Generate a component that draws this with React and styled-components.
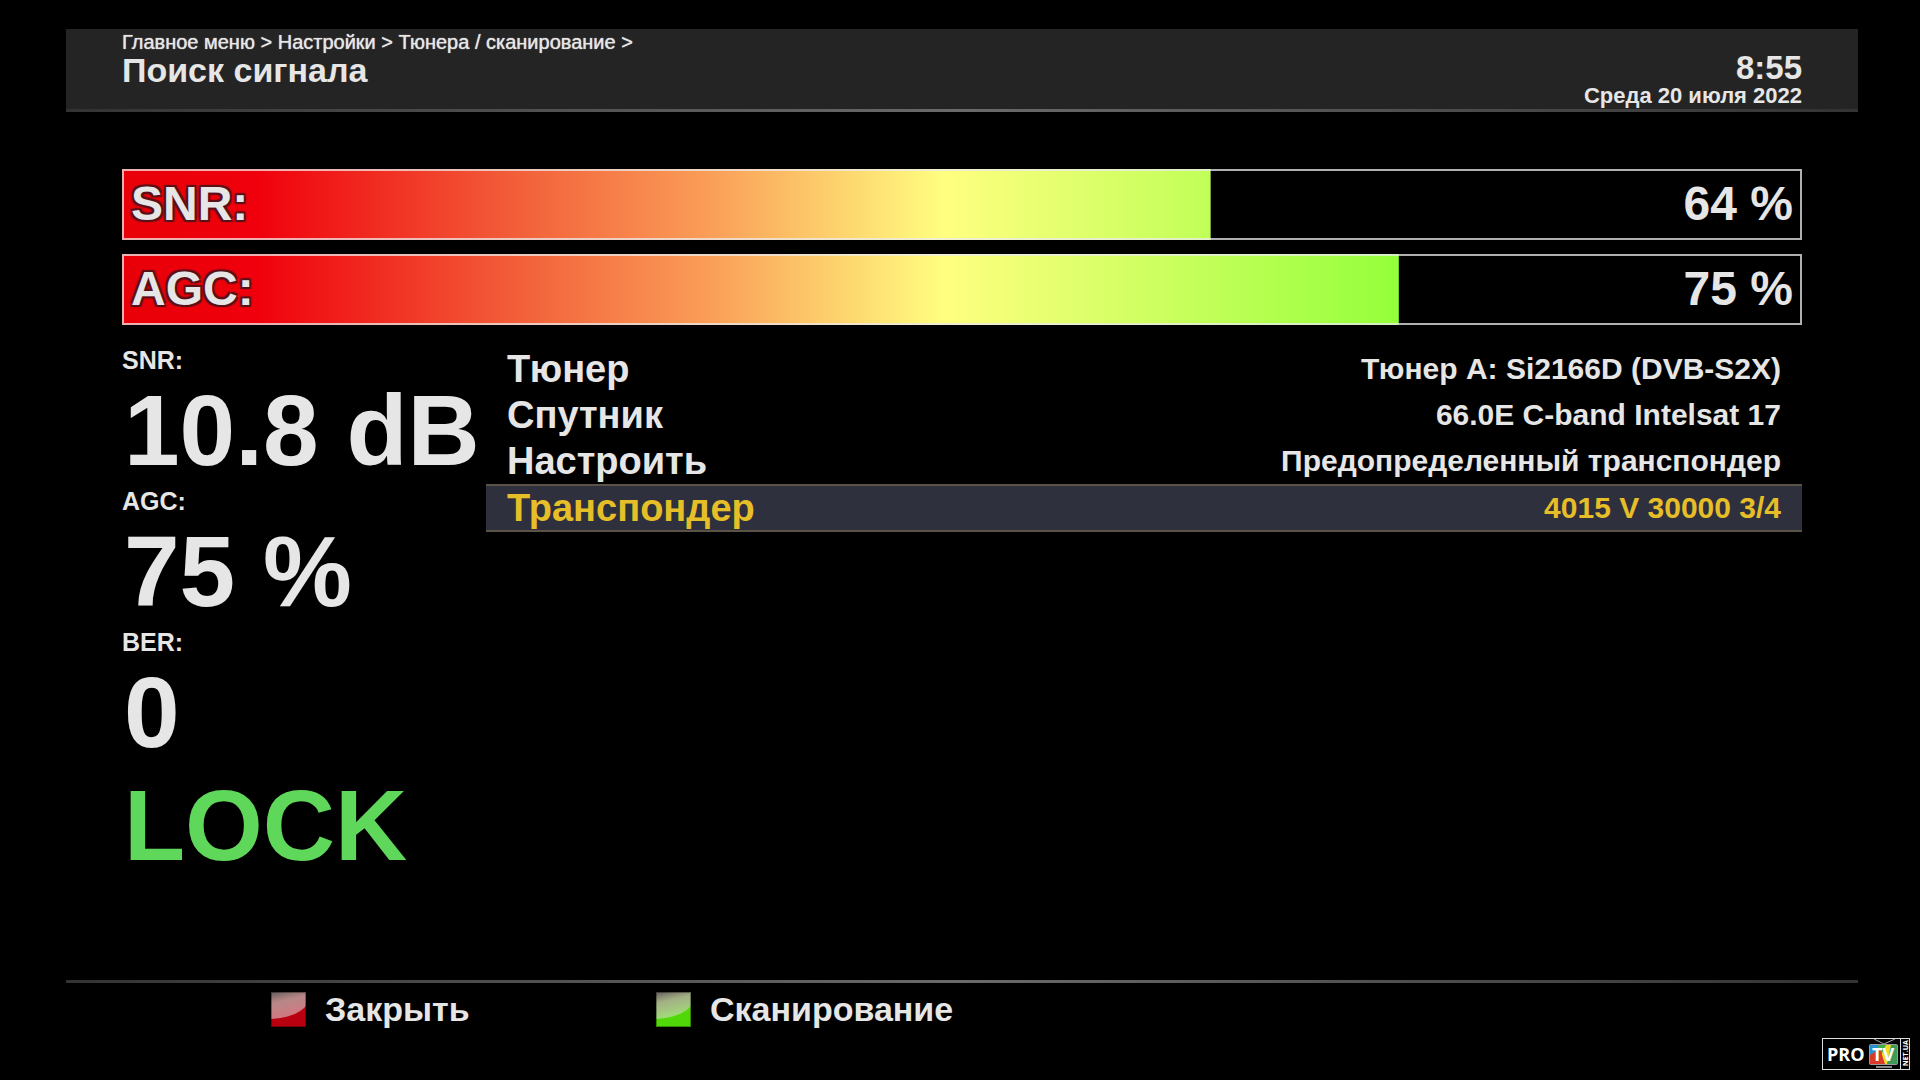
import React from 'react'
import styled, { createGlobalStyle, css } from 'styled-components'

const GlobalStyle = createGlobalStyle`
  * {
    box-sizing: border-box;
  }

  body {
    margin: 0;
    background: #000;
    color: #e6e6e6;
    font-family: 'Liberation Sans', Arial, sans-serif;
    font-weight: bold;
  }
`

const Screen = styled.div`
  position: relative;
  display: flex;
  flex-direction: column;
  min-height: 100vh;
  padding: 29px 62px 0 66px;
`

const Header = styled.header`
  display: flex;
  justify-content: space-between;
  padding: 2px 56px 0;
  height: 83px;
  background: #242424;
  border-bottom: 3px solid;
  border-image: linear-gradient(90deg, #333, #6a6a6a 50%, #333) 1;
`

const Breadcrumbs = styled.nav`
  font-size: 20px;
  font-weight: normal;
  line-height: 22px;
  text-shadow: 0 0 1px #e6e6e6;

  a {
    color: inherit;
    text-decoration: none;
  }
`

const Title = styled.h1`
  margin: 0;
  font-size: 34px;
  line-height: 34px;
`

const Clock = styled.div`
  display: flex;
  flex-direction: column;
  padding-top: 20px;
  text-align: right;
`

const Time = styled.time`
  font-size: 33px;
  line-height: 34px;
`

const Day = styled.time`
  font-size: 22px;
  line-height: 22px;
`

const Main = styled.main`
  flex: 1;
  padding: 57px 56px 0;
`

const Meters = styled.section`
  display: flex;
  flex-direction: column;
  gap: 14px;
`

const Meter = styled.div`
  position: relative;
  display: flex;
  align-items: center;
  justify-content: space-between;
  height: 71px;
  padding: 0 9px 2px;
  font-size: 48px;
`

const MeterFill = styled.div`
  position: absolute;
  inset: 0;
  background: linear-gradient(
    90deg,
    #e80008 0%,
    #f0000c 8%,
    #f25c38 23%,
    #fa9e58 35%,
    #ffff80 49%,
    #90ff38 77%
  );
`

const MeterFrame = styled.div`
  position: absolute;
  inset: 0;
  border: 2px solid rgba(235, 235, 235, 0.75);
`

const MeterText = styled.span`
  position: relative;
  text-shadow: ${props =>
    props.$outlined
      ? '-2px -2px 1px #5a1018, 2px -2px 1px #5a1018, -2px 2px 1px #5a1018, 2px 2px 1px #5a1018'
      : 'none'};
`

const Columns = styled.div`
  display: grid;
  grid-template-columns: 364px 1fr;
  margin-top: 19px;
`

const valueStyles = css`
  padding-left: 2px;
  font-size: 100px;
  line-height: 109px;
`

const Readings = styled.dl`
  margin: 0;
  white-space: nowrap;

  dt {
    font-size: 25px;
    line-height: 32px;
  }

  dd {
    margin: 0;
    ${valueStyles}
  }
`

const Lock = styled.div`
  margin-top: 4px;
  color: #5fd75a;
  ${valueStyles}
`

const Settings = styled.div`
  display: flex;
  flex-direction: column;
  padding-top: 2px;
`

const selectedStyles = css`
  height: 48px;
  background: #2e303e;
  border-color: #5c5348;
  color: #e6be28;
`

const SettingRow = styled.button`
  display: flex;
  align-items: center;
  justify-content: space-between;
  height: 46px;
  padding: 0 21px;
  background: none;
  border: solid transparent;
  border-width: 2px 0;
  color: inherit;
  font: inherit;
  font-size: 38px;
  line-height: 42px;
  text-align: left;

  ${props => props.$selected && selectedStyles}
`

const SettingValue = styled.span`
  font-size: 30px;
`

const Footer = styled.footer`
  display: flex;
  height: 100px;
  padding: 9px 0 0 205px;
  border-top: 3px solid;
  border-image: linear-gradient(90deg, #333, #6a6a6a 50%, #333) 1;
`

const ColorButton = styled.button`
  display: flex;
  align-items: center;
  gap: 19px;
  width: 385px;
  height: 35px;
  padding: 0;
  background: none;
  border: 0;
  color: inherit;
  font: inherit;
  font-size: 34px;
`

const Watermark = styled.svg`
  position: absolute;
  right: 10px;
  bottom: 10px;
`

const meters = [
  { name: 'SNR:', value: '64 %', level: 64.8 },
  { name: 'AGC:', value: '75 %', level: 76 },
]

const readings = [
  { name: 'SNR:', value: '10.8 dB' },
  { name: 'AGC:', value: '75 %' },
  { name: 'BER:', value: '0' },
]

const settings = [
  { name: 'Тюнер', value: 'Тюнер A: Si2166D (DVB-S2X)' },
  { name: 'Спутник', value: '66.0E C-band Intelsat 17' },
  { name: 'Настроить', value: 'Предопределенный транспондер' },
  { name: 'Транспондер', value: '4015 V 30000 3/4', selected: true },
]

const actions = [
  { id: 'red', name: 'Закрыть', color: '#b80010', shine: '#d07880' },
  { id: 'green', name: 'Сканирование', color: '#50d808', shine: '#a0d878' },
]

const Swatch = ({ id, color, shine }) => (
  <svg width="35" height="35" viewBox="0 0 35 35" aria-hidden="true">
    <defs>
      <linearGradient id={`shine-${id}`} x1="0" y1="0" x2="0.3" y2="1">
        <stop offset="0" stopColor="#605858" />
        <stop offset="0.4" stopColor="#b8a8a4" stopOpacity="0.8" />
        <stop offset="0.9" stopColor={shine} />
      </linearGradient>
    </defs>
    <rect width="35" height="35" fill={color} />
    <path d="M0 0H35V14C28 22 16 26 0 27Z" fill={`url(#shine-${id})`} />
    <rect
      x="0.5"
      y="0.5"
      width="34"
      height="34"
      fill="none"
      stroke="#000"
      strokeOpacity="0.35"
    />
  </svg>
)

const ProTv = () => (
  <Watermark width="88" height="32" viewBox="0 0 88 32" role="img" aria-label="PRO TV NET.UA">
    <rect x="0.5" y="0.5" width="87" height="31" fill="#000" stroke="#ddd" />
    <path d="M78.5 0V31" stroke="#ddd" />
    <text x="5" y="23" fontSize="18" fill="#fff" fontFamily="Open Sans, sans-serif">
      PRO
    </text>
    <path d="M62 6L52 1M62 6L73 1" stroke="#aaa" />
    <rect x="47" y="6" width="29" height="21" rx="2" fill="#9a9a9a" />
    <path d="M48 7H61L57 18L48 24Z" fill="#2a8fd0" />
    <path d="M57 7H66L60 25H48V21Z" fill="#3fae49" />
    <path d="M64 7H71L66 26H55Z" fill="#f2dc20" />
    <path d="M48 26V17L58 11L63 26Z" fill="#d93a2a" />
    <path d="M69 7H75V26H65Z" fill="#3f9a58" />
    <path d="M54 29H70" stroke="#888" strokeWidth="2" />
    <text x="50" y="23" fontSize="18" fill="#fff" fontFamily="Open Sans, sans-serif">
      TV
    </text>
    <text
      transform="translate(86 28) rotate(-90)"
      fontSize="7"
      fill="#fff"
      fontFamily="Open Sans, sans-serif"
    >
      NET.UA
    </text>
  </Watermark>
)

const App = () => (
  <Screen>
    <GlobalStyle />
    <Header>
      <div>
        <Breadcrumbs>
          <a href="#menu">Главное меню</a> &gt; <a href="#setup">Настройки</a> &gt;{' '}
          <a href="#tuners">Тюнера / сканирование</a> &gt;
        </Breadcrumbs>
        <Title>Поиск сигнала</Title>
      </div>
      <Clock>
        <Time>8:55</Time>
        <Day dateTime="2022-07-20">Среда 20 июля 2022</Day>
      </Clock>
    </Header>
    <Main>
      <Meters>
        {meters.map(item => (
          <Meter key={item.name}>
            <MeterFill style={{ clipPath: `inset(0 ${100 - item.level}% 0 0)` }} />
            <MeterFrame />
            <MeterText $outlined>{item.name}</MeterText>
            <MeterText>{item.value}</MeterText>
          </Meter>
        ))}
      </Meters>
      <Columns>
        <div>
          <Readings>
            {readings.map(item => (
              <React.Fragment key={item.name}>
                <dt>{item.name}</dt>
                <dd>{item.value}</dd>
              </React.Fragment>
            ))}
          </Readings>
          <Lock>LOCK</Lock>
        </div>
        <Settings>
          {settings.map(item => (
            <SettingRow key={item.name} type="button" $selected={item.selected}>
              <span>{item.name}</span>
              <SettingValue>{item.value}</SettingValue>
            </SettingRow>
          ))}
        </Settings>
      </Columns>
    </Main>
    <Footer>
      {actions.map(item => (
        <ColorButton key={item.id} type="button">
          <Swatch {...item} />
          {item.name}
        </ColorButton>
      ))}
    </Footer>
    <ProTv />
  </Screen>
)

export default App
